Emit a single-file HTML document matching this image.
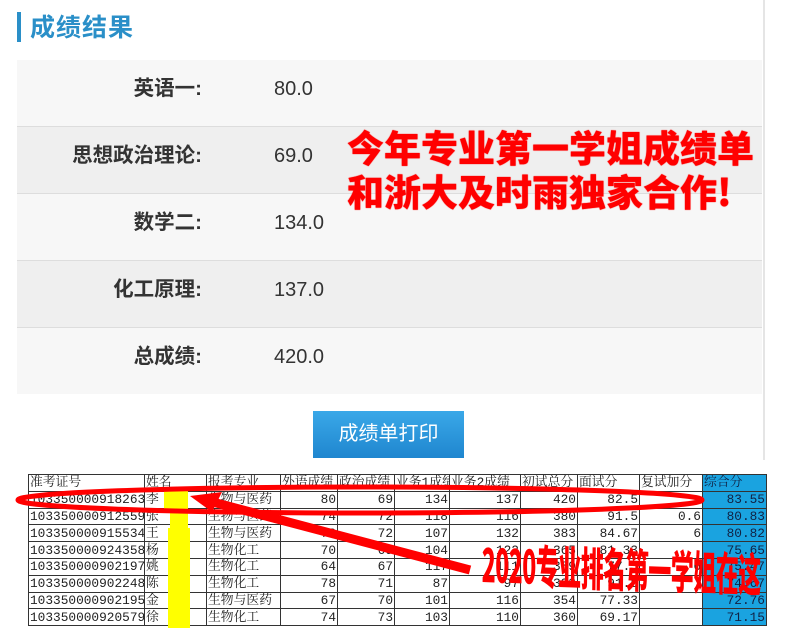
<!DOCTYPE html><html><head><meta charset="utf-8"><style>
body{margin:0;width:788px;height:634px;background:#fff;position:relative;overflow:hidden;font-family:"Liberation Sans","Noto Sans CJK SC",sans-serif}
.t{position:absolute;left:17px;top:12px;width:4px;height:30px;background:#2a8fc8}
.h{position:absolute;left:30px;top:8px;font-size:25px;color:#2a8fc8;font-weight:bold;letter-spacing:1px}
.panel{position:absolute;left:17px;top:60px;width:745px}
.r{height:66px;border-bottom:1px solid #ddd;position:relative;font-size:20px;color:#333}
.r .l{position:absolute;right:560px;top:15px;font-weight:bold;font-size:20.5px;line-height:28px}
.r .v{position:absolute;left:257px;top:16px;line-height:26px}
.vl{position:absolute;left:763px;top:0;width:2px;height:460px;background:#e5e5e5}
.btn{position:absolute;left:313px;top:411px;width:151px;height:47px;background:linear-gradient(#3aa8e8,#1f86cf);color:#fff;font-size:20px;text-align:center;line-height:47px}
table{position:absolute;left:28px;top:474px;width:738px;border-collapse:collapse;font-family:"Liberation Mono","Noto Serif CJK SC",serif;font-size:12.8px;color:#222;table-layout:fixed}
td{border:1px solid #333;height:15.8px;padding:0 1px;line-height:15px;white-space:nowrap;overflow:hidden;text-align:right}
td.a{text-align:left}
td.b{background:#1aa3e0;color:#124}
.red{position:absolute;color:#f00;font-weight:900;font-size:37px;line-height:44px;font-family:"Noto Sans CJK SC",sans-serif;left:347px;top:124px;text-shadow:0 0 1px #f00}
.y{position:absolute;background:#ffff00}
</style></head><body>
<div class="t"></div><div class="h">成绩结果</div>
<div class="panel">
<div class="r" style="background:#f7f7f7"><span class="l">英语一:</span><span class="v">80.0</span></div>
<div class="r" style="background:#efefef"><span class="l">思想政治理论:</span><span class="v">69.0</span></div>
<div class="r" style="background:#f7f7f7"><span class="l">数学二:</span><span class="v">134.0</span></div>
<div class="r" style="background:#efefef"><span class="l">化工原理:</span><span class="v">137.0</span></div>
<div class="r" style="background:#f7f7f7;border:0"><span class="l">总成绩:</span><span class="v">420.0</span></div>
</div>
<div class="vl"></div>
<div class="btn">成绩单打印</div>
<div class="red">今年专业第一学姐成绩单<br>和浙大及时雨独家合作!</div>
<table>
<colgroup><col style="width:116px"><col style="width:62px"><col style="width:74px"><col style="width:57px"><col style="width:57px"><col style="width:55px"><col style="width:71px"><col style="width:57px"><col style="width:62px"><col style="width:63px"><col style="width:64px"></colgroup>
<tr><td class="a">准考证号</td><td class="a">姓名</td><td class="a">报考专业</td><td class="a">外语成绩</td><td class="a">政治成绩</td><td class="a">业务1成绩</td><td class="a">业务2成绩</td><td class="a">初试总分</td><td class="a">面试分</td><td class="a">复试加分</td><td class="a b">综合分</td></tr>
<tr><td class="a">103350000918263</td><td class="a">李</td><td class="a">生物与医药</td><td>80</td><td>69</td><td>134</td><td>137</td><td>420</td><td>82.5</td><td></td><td class="b">83.55</td></tr>
<tr><td class="a">103350000912559</td><td class="a">张</td><td class="a">生物与医药</td><td>74</td><td>72</td><td>118</td><td>116</td><td>380</td><td>91.5</td><td>0.6</td><td class="b">80.83</td></tr>
<tr><td class="a">103350000915534</td><td class="a">王</td><td class="a">生物与医药</td><td>72</td><td>72</td><td>107</td><td>132</td><td>383</td><td>84.67</td><td>6</td><td class="b">80.82</td></tr>
<tr><td class="a">103350000924358</td><td class="a">杨</td><td class="a">生物化工</td><td>70</td><td>69</td><td>104</td><td>122</td><td>365</td><td>81.33</td><td></td><td class="b">75.65</td></tr>
<tr><td class="a">103350000902197</td><td class="a">姚</td><td class="a">生物化工</td><td>64</td><td>67</td><td>117</td><td>111</td><td>359</td><td>77.5</td><td>6</td><td class="b">75.47</td></tr>
<tr><td class="a">103350000902248</td><td class="a">陈</td><td class="a">生物化工</td><td>78</td><td>71</td><td>87</td><td>97</td><td>333</td><td>91.5</td><td></td><td class="b">74.67</td></tr>
<tr><td class="a">103350000902195</td><td class="a">金</td><td class="a">生物与医药</td><td>67</td><td>70</td><td>101</td><td>116</td><td>354</td><td>77.33</td><td></td><td class="b">72.76</td></tr>
<tr><td class="a">103350000920579</td><td class="a">徐</td><td class="a">生物化工</td><td>74</td><td>73</td><td>103</td><td>110</td><td>360</td><td>69.17</td><td></td><td class="b">71.15</td></tr>
</table>
<div class="y" style="left:164px;top:490px;width:24px;height:22px"></div>
<div class="y" style="left:170px;top:510px;width:18px;height:22px"></div>
<div class="y" style="left:168px;top:528px;width:22px;height:100px"></div>
<svg style="position:absolute;left:0;top:0" width="788" height="634">
<ellipse cx="360" cy="500" rx="342" ry="13" fill="none" stroke="#f00" stroke-width="5"/>
<path d="M470 570 L205 500" stroke="#f00" stroke-width="9" fill="none"/>
<path d="M190 496 L222 492 L212 512 Z" fill="#f00"/>
</svg>
<div style="position:absolute;left:482px;top:538px;color:#f00;font-weight:900;font-size:46px;line-height:50px;font-family:'Noto Sans CJK SC',sans-serif;transform:scaleX(0.5) rotate(1deg);transform-origin:0 0;white-space:nowrap;letter-spacing:-1px">2020专业排名第一学姐在这</div>
</body></html>
